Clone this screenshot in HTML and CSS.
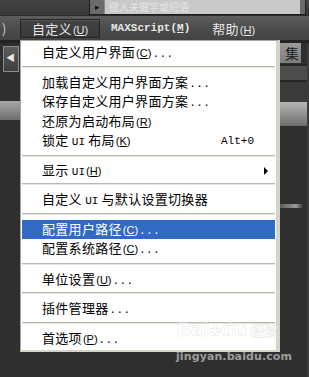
FILE: index.html
```html
<!DOCTYPE html>
<html>
  <head>
    <meta charset="UTF-8">
    <title>自定义菜单</title>
    <link rel="stylesheet" href="styles.css">
  </head>
  <body>
    <div class="screen">
      <div class="topbar">
        <div class="search">
          <span class="search-icon">&#9656;</span>
          <span class="search-field">键入关键字或短语</span>
        </div>
      </div>

      <div class="menubar">
        <span class="mb-item mb-edge">)</span>
        <span class="mb-item active">自定义<span class="mn">(<u>U</u>)</span></span>
        <span class="mb-item mono">MAXScript(<u>M</u>)</span>
        <span class="mb-item">帮助<span class="mn">(<u>H</u>)</span></span>
      </div>

      <div class="workspace">
        <div class="side-left">
          <div class="tool-btn"><span>&#9664;</span></div>
          <div class="band"></div>
        </div>
        <div class="center"></div>
        <div class="side-right">
          <div class="set-btn">集</div>
          <div class="strip strip-a"></div>
          <div class="strip strip-b"></div>
          <div class="band"></div>
          <div class="streak"></div>
        </div>
      </div>

      <!-- dropdown of 自定义 -->
      <div class="dropdown">
        <div class="item"><span class="label">自定义用户界面<span class="mn">(<u>C</u>)</span><span class="dots">...</span></span></div>
        <div class="sep"></div>
        <div class="item"><span class="label">加载自定义用户界面方案<span class="dots">...</span></span></div>
        <div class="item"><span class="label">保存自定义用户界面方案<span class="dots">...</span></span></div>
        <div class="item"><span class="label">还原为启动布局<span class="mn">(<u>R</u>)</span></span></div>
        <div class="item"><span class="label">锁定 <span class="ui">UI</span> 布局<span class="mn">(<u>K</u>)</span></span><span class="key">Alt+0</span></div>
        <div class="sep sep-low"></div>
        <div class="item"><span class="label">显示 <span class="ui">UI</span><span class="mn">(<u>H</u>)</span></span><span class="arrow"></span></div>
        <div class="sep"></div>
        <div class="item"><span class="label">自定义 <span class="ui">UI</span> 与默认设置切换器</span></div>
        <div class="sep"></div>
        <div class="item selected"><span class="label">配置用户路径<span class="mn">(<u>C</u>)</span><span class="dots">...</span></span></div>
        <div class="item"><span class="label">配置系统路径<span class="mn">(<u>C</u>)</span><span class="dots">...</span></span></div>
        <div class="sep sep-wide"></div>
        <div class="item"><span class="label">单位设置<span class="mn">(<u>U</u>)</span><span class="dots">...</span></span></div>
        <div class="sep"></div>
        <div class="item"><span class="label">插件管理器<span class="dots">...</span></span></div>
        <div class="sep"></div>
        <div class="item"><span class="label">首选项<span class="mn">(<u>P</u>)</span><span class="dots">...</span></span></div>
      </div>

      <div class="watermark">
        <div class="wm-logo">Bai<span class="paw">&#10047;</span>du<span class="wm-cn">经验</span></div>
        <div class="wm-url">jingyan.baidu.com</div>
      </div>
    </div>
  </body>
</html>
```

FILE: styles.css
```css
*{
  box-sizing: border-box;
}
html, body{
  margin: 0;
  padding: 0;
  width: 100%;
  height: 100%;
  background: #2f2f2f;
}
.screen{
  position: relative;
  width: 309px;
  height: 377px;
  overflow: hidden;
  display: flex;
  flex-direction: column;
  font-family: "Noto Sans CJK SC", sans-serif;
  background: #2f2f2f;
}

/* top strip with search box */
.topbar{
  height: 16px;
  background: linear-gradient(#444, #383838);
  padding-left: 89px;
  border-bottom: 1px solid #2a2a2a;
}
.search{
  display: flex;
  width: 217px;
  height: 15px;
  background: #6b6b6b;
  border: 1px solid #1f1f1f;
  border-top: none;
}
.search-icon{
  width: 14px;
  font-size: 9px;
  line-height: 13px;
  color: #111;
  text-align: center;
}
.search-field{
  flex: 1;
  margin-right: 5px;
  background: #c9c9c9;
  border-left: 1px solid #888;
  color: #e4e4e4;
  font-size: 10px;
  line-height: 14px;
  padding-left: 4px;
  overflow: hidden;
  white-space: nowrap;
}

/* menu bar */
.menubar{
  height: 24px;
  display: flex;
  align-items: center;
  background: linear-gradient(#5d5d5d, #4a4a4a 60%, #434343);
  color: #e6e6e6;
  font-size: 13px;
  letter-spacing: 0.3px;
}
.mb-item{
  height: 19px;
  line-height: 19px;
  padding: 0 11px;
  white-space: nowrap;
}
.mb-edge{
  width: 20px;
  padding: 0 0 0 2px;
  color: #cfcfcf;
}
.mb-item.active{
  width: 80px;
  padding-left: 11px;
  background: linear-gradient(#434343, #393939);
  border: 1px solid #262626;
  box-shadow: inset 0 1px 0 #555;
  line-height: 17px;
}
.mono{
  font-family: "Liberation Mono", monospace;
  font-weight: bold;
  font-size: 11px;
  letter-spacing: 0;
}
.mn{
  font-family: "Liberation Sans", sans-serif;
  font-size: 11px;
  letter-spacing: 0;
  margin-left: 1px;
}
.mn u{
  text-underline-offset: 1px;
}

/* background tool panels */
.workspace{
  flex: 1;
  display: flex;
  border-top: 3px solid #232323;
}
.side-left{
  width: 20px;
  display: flex;
  flex-direction: column;
  padding-top: 3px;
}
.tool-btn{
  margin-left: 3px;
  width: 16px;
  height: 26px;
  border: 1px solid #8a8a8a;
  background: linear-gradient(#5c5c5c, #3e3e3e);
  font-size: 9px;
  color: #e8e8e8;
  padding-top: 4px;
  padding-left: 2px;
}
.side-left .band{
  margin-top: 29px;
  height: 19px;
  background: linear-gradient(#a7a7a7, #6e6e6e);
}
.center{
  flex: 1;
}
.side-right{
  width: 30px;
  display: flex;
  flex-direction: column;
  border-right: 2px solid #3c3c3c;
}
.set-btn{
  height: 20px;
  width: 22px;
  background: linear-gradient(#9a9a9a, #7d7d7d);
  color: #1e1e1e;
  font-size: 14px;
  line-height: 20px;
  text-align: right;
  padding-right: 2px;
}
.strip{
  border-top: 2px solid #262626;
}
.strip-a{
  height: 16px;
  background: #4d4d4d;
  margin-top: 1px;
}
.strip-b{
  height: 22px;
  background: #3a3a3a;
}
.side-right .band{
  height: 24px;
  background: linear-gradient(#b7b7b7, #6d6d6d);
}
.streak{
  margin-top: 78px;
  height: 4px;
  width: 24px;
  border-radius: 2px;
  background: linear-gradient(90deg, #5a5a5a, #9a9a9a 70%, #3a3a3a);
}

/* dropdown menu */
.dropdown{
  position: absolute;
  left: 20px;
  top: 40px;
  width: 260px;
  height: 312px;
  background: #fff;
  border: 1px solid #a8a6a0;
  border-right: 4px solid #d6d3c9;
  border-bottom: 2px solid #d6d3c9;
  padding: 2px 1px 3px;
  font-size: 13px;
  letter-spacing: 0.3px;
  color: #000;
}
.item{
  display: flex;
  align-items: center;
  height: 19.5px;
  padding-left: 20px;
  padding-top: 1px;
  white-space: nowrap;
}
.label{
  line-height: 18px;
}
.item.selected{
  background: #316ac5;
  color: #fff;
}
.dots{
  font-family: "Liberation Mono", monospace;
  font-size: 11px;
  letter-spacing: 0.4px;
  margin-left: 1px;
}
.ui{
  font-family: "Liberation Mono", monospace;
  font-size: 11px;
  letter-spacing: 0;
}
.key{
  margin-left: auto;
  margin-right: 21px;
  font-family: "Liberation Mono", monospace;
  font-size: 11px;
  letter-spacing: 0;
}
.arrow{
  margin-left: auto;
  margin-right: 7px;
  width: 0;
  height: 0;
  border-top: 4px solid transparent;
  border-bottom: 4px solid transparent;
  border-left: 4px solid #000;
}
.sep{
  height: 10px;
  padding-top: 3px;
}
.sep::before{
  content: "";
  display: block;
  height: 1px;
  background: #bbb8ae;
  border-bottom: 1px solid #e6e4de;
  box-sizing: content-box;
}
.sep-low{
  padding-top: 4px;
}
.sep-wide{
  height: 11px;
  padding-top: 4px;
}

/* image watermark */
.watermark{
  position: absolute;
  left: 176px;
  top: 316px;
  width: 104px;
  text-align: center;
  font-family: "DejaVu Sans", sans-serif;
  white-space: nowrap;
  pointer-events: none;
}
.wm-logo{
  font-size: 19px;
  font-weight: bold;
  line-height: 26px;
  color: rgba(255, 255, 255, 0.4);
  -webkit-text-stroke: 0.6px rgba(170, 170, 170, 0.3);
  letter-spacing: -0.5px;
}
.paw{
  font-size: 14px;
}
.wm-cn{
  margin-left: 4px;
  font-family: "Noto Sans CJK SC", sans-serif;
  font-size: 15px;
}
.wm-url{
  margin-top: 6px;
  font-size: 11px;
  font-weight: bold;
  color: #9c9c9c;
  letter-spacing: 0.1px;
}
```
